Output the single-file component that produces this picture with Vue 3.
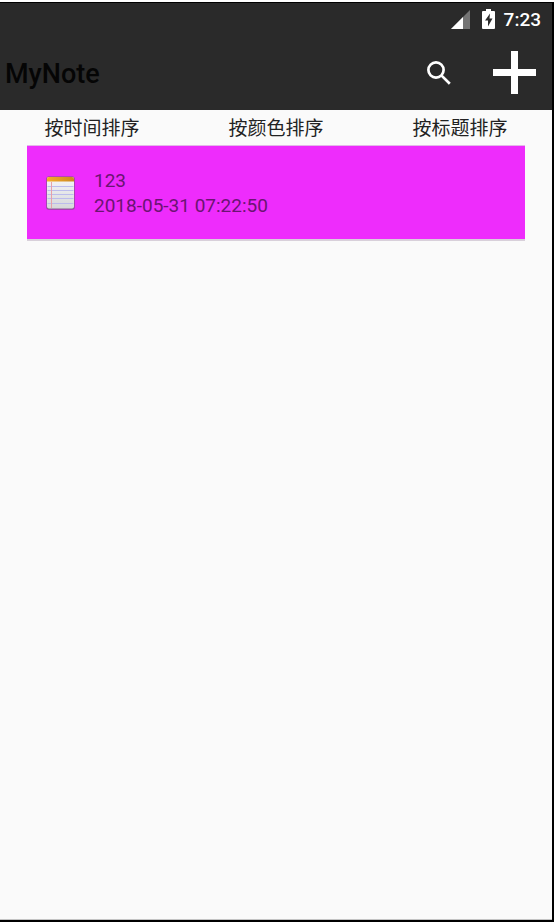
<script setup>
import { ref } from 'vue'

const sortModes = ['按时间排序', '按颜色排序', '按标题排序']
const notes = ref([{ title: '123', time: '2018-05-31 07:22:50', color: '#ee2cfc' }])
</script>

<template>
  <div class="screen">
    <header class="top">
      <div class="status">
        <svg class="signal" viewBox="0 0 19 19" aria-hidden="true">
          <path d="M19 0V19H0Z" fill="#747474" />
          <path d="M12 7V19H0Z" fill="#fff" />
        </svg>
        <svg class="battery" viewBox="0 0 13 20" aria-hidden="true">
          <path d="M4 0H9V2H12Q13 2 13 3V19Q13 20 12 20H1Q0 20 0 19V3Q0 2 1 2H4Z" fill="#fff" />
          <path d="M8 4.5L3 11.5H6V17.5L10.5 9.5H7.5Z" fill="#2a2a2a" />
        </svg>
        <time class="clock">7:23</time>
      </div>
      <div class="bar">
        <h1 class="title">MyNote</h1>
        <button class="action search" type="button" aria-label="Search">
          <svg viewBox="0 0 24 24">
            <circle cx="9" cy="9" r="7.6" />
            <path d="M14.6 14.6L22.8 22.8" />
          </svg>
        </button>
        <button class="action add" type="button" aria-label="Add">
          <svg viewBox="0 0 43 43">
            <path d="M0 21.5H43M21.5 0V43" />
          </svg>
        </button>
      </div>
    </header>

    <nav class="sorts">
      <button v-for="mode in sortModes" :key="mode" class="sort" type="button">{{ mode }}</button>
    </nav>

    <ul class="notes">
      <li v-for="note in notes" :key="note.time" class="note" :style="{ backgroundColor: note.color }">
        <svg class="note-icon" viewBox="0 0 30 36" aria-hidden="true">
          <defs>
            <linearGradient id="paper" x1="0" y1="0" x2="0" y2="1">
              <stop offset="0" stop-color="#f6f6f8" />
              <stop offset="1" stop-color="#d6d8da" />
            </linearGradient>
            <linearGradient id="binding" x1="0" y1="0" x2="1" y2="0">
              <stop offset="0" stop-color="#f6ac28" />
              <stop offset="1" stop-color="#cc8822" />
            </linearGradient>
          </defs>
          <rect x="0" y="1.5" width="29" height="33.5" rx="3" fill="#7a2c86" opacity="0.35" />
          <rect x="0.5" y="1.5" width="28" height="33" rx="2" fill="#8a5a94" />
          <rect x="1" y="2" width="27" height="31.5" rx="2" fill="url(#paper)" />
          <path d="M1 6.5V4Q1 2 3 2H26Q28 2 28 4V6.5Z" fill="url(#binding)" />
          <path d="M1.5 11.5H27.5M1.5 15.5H27.5M1.5 19.5H27.5M1.5 23.5H27.5M1.5 28.5H27.5" stroke="#bcbcec" />
          <path d="M5.5 7V33" stroke="#e8a0a8" />
        </svg>
        <div class="note-text">
          <span>{{ note.title }}</span>
          <time>{{ note.time }}</time>
        </div>
      </li>
    </ul>
  </div>
</template>

<style>
body {
  background: #fff;
}
</style>

<style scoped>
.screen {
  box-sizing: border-box;
  display: flex;
  flex-direction: column;
  min-height: calc(100vh - 2px);
  margin-top: 2px;
  border: solid #000;
  border-width: 1px 2px 2px 0;
  background: #fafafa;
  box-shadow: inset 0 -1px #c4c4c4;
  font-family: Roboto, "Noto Sans CJK SC", sans-serif;
}

.top {
  background: #2a2a2a;
}

.status {
  display: flex;
  align-items: center;
  justify-content: flex-end;
  height: 32px;
  padding-right: 11px;
  color: #fff;
}

.signal {
  width: 19px;
  height: 19px;
  margin-right: 12px;
}

.battery {
  width: 13px;
  height: 20px;
  margin-right: 9px;
}

.clock {
  font-size: 19px;
  font-weight: 500;
}

.bar {
  display: flex;
  align-items: center;
  height: 75px;
  padding: 0 16px 0 5px;
}

.title {
  flex: 1;
  margin: 0;
  padding-top: 2px;
  color: #050505;
  font-size: 27px;
  font-weight: 500;
}

.action {
  display: flex;
  padding: 0;
  border: 0;
  background: none;
}

.action svg {
  fill: none;
  stroke: #fff;
}

.search {
  margin-right: 42px;
}

.search svg {
  width: 24px;
  height: 24px;
  stroke-width: 2.7;
}

.add svg {
  width: 43px;
  height: 43px;
  stroke-width: 7;
}

.sorts {
  display: grid;
  grid-template-columns: repeat(3, 1fr);
  height: 35px;
}

.sort {
  padding: 2px 0 0;
  border: 0;
  background: none;
  color: #222;
  font-family: inherit;
  font-size: 19px;
  line-height: 33px;
}

.notes {
  margin: 0 27px;
  padding: 0;
  list-style: none;
}

.note {
  display: flex;
  align-items: center;
  gap: 18px;
  height: 93px;
  padding-left: 19px;
  border-top: 1px solid #e2b8e8;
  border-bottom: 2px solid #d8d0da;
  background-clip: padding-box;
}

.note-icon {
  width: 30px;
  height: 36px;
}

.note-text {
  display: flex;
  flex-direction: column;
  color: #6b1472;
  font-size: 19px;
  line-height: 25px;
}
</style>
